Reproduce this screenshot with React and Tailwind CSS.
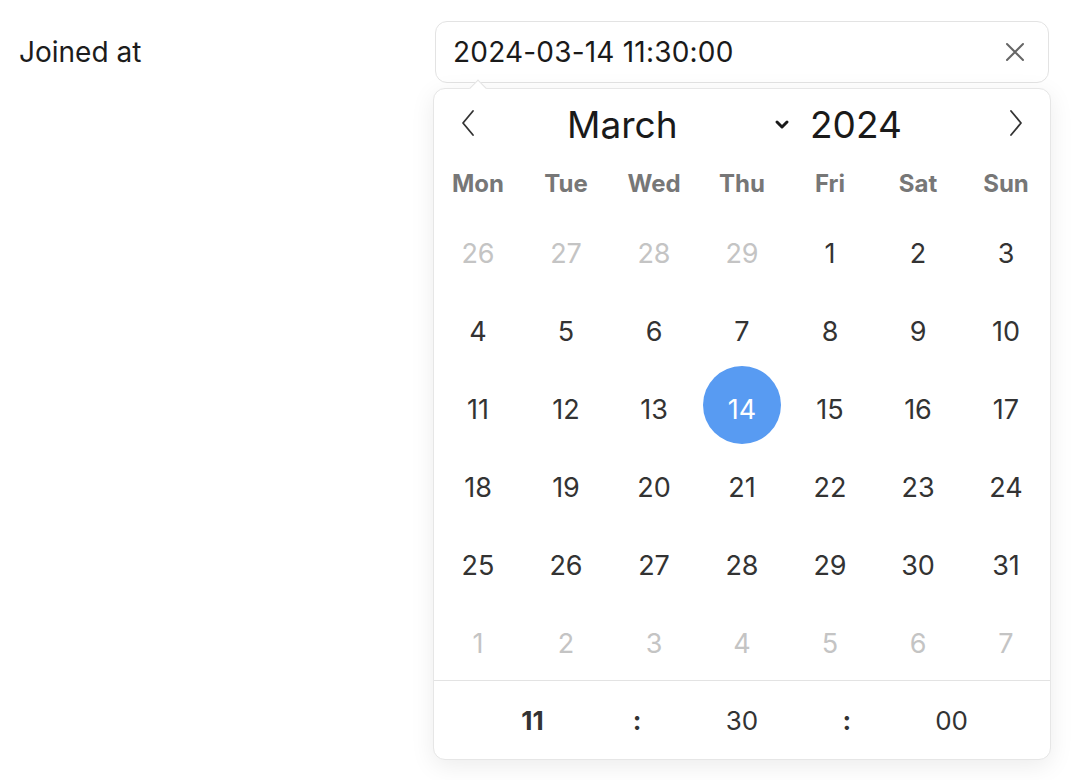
import React from 'react';

const weekdays = ['Mon', 'Tue', 'Wed', 'Thu', 'Fri', 'Sat', 'Sun'];

const buildDays = () => {
  const days = [];
  [26, 27, 28, 29].forEach((d) => days.push({ d, muted: true }));
  for (let d = 1; d <= 31; d++) days.push({ d, muted: false });
  for (let d = 1; d <= 7; d++) days.push({ d, muted: true });
  return days;
};

const App = () => {
  const days = buildDays();

  return (
    <div className="min-h-screen bg-white font-['Inter',sans-serif] relative">
      <div className="flex items-start pt-[21px]">
        <div className="w-[435px] pl-[19px] h-[62px] flex items-center text-[28px] text-[#1c1c1c]">
          Joined at
        </div>

        <div className="flex flex-col">
          <div className="w-[614px] h-[62px] border border-[#e3e3e3] rounded-[12px] flex items-center pl-[17px] pr-[22px] justify-between">
            <span className="text-[28px] text-[#1a1a1a] tracking-[0.2px]">2024-03-14 11:30:00</span>
            <svg width="22" height="22" viewBox="0 0 22 22" fill="none" stroke="#666" strokeWidth="2" strokeLinecap="round">
              <path d="M3 3 L19 19 M19 3 L3 19" />
            </svg>
          </div>

          <div className="relative -ml-[2px] mt-[5px] w-[618px] bg-white border border-[#e6e6e6] rounded-[12px] shadow-[0_6px_24px_rgba(0,0,0,0.08)]">
            <div className="absolute -top-[7px] left-[38px] w-[12px] h-[12px] bg-white border-l border-t border-[#e3e3e3] rotate-45" />

            <div className="flex items-center h-[72px]">
              <div className="w-[68px] flex justify-center -mt-[5px]">
                <svg width="16" height="28" viewBox="0 0 16 28" fill="none" stroke="#333" strokeWidth="1.8" strokeLinecap="round" strokeLinejoin="round">
                  <path d="M13 2 L3 14 L13 26" />
                </svg>
              </div>
              <div className="w-[272px] pl-[65px] text-[37px] text-[#1a1a1a]">March</div>
              <svg width="16" height="12" viewBox="0 0 16 12" fill="none" stroke="#1a1a1a" strokeWidth="3" strokeLinecap="round" strokeLinejoin="round">
                <path d="M3 3 L8 8 L13 3" />
              </svg>
              <div className="ml-[20px] text-[37px] text-[#1a1a1a]">2024</div>
              <div className="flex-1 flex justify-end pr-[26px] -mt-[5px]">
                <svg width="16" height="28" viewBox="0 0 16 28" fill="none" stroke="#333" strokeWidth="1.8" strokeLinecap="round" strokeLinejoin="round">
                  <path d="M3 2 L13 14 L3 26" />
                </svg>
              </div>
            </div>

            <div className="grid grid-cols-7 h-[46px] items-center">
              {weekdays.map((w) => (
                <div key={w} className="text-center text-[24px] font-bold text-[#777]">{w}</div>
              ))}
            </div>

            <div className="grid grid-cols-7 pt-[8px]">
              {days.map((item, i) => {
                const selected = !item.muted && item.d === 14;
                return (
                  <div key={i} className="h-[78px] flex items-center justify-center">
                    {selected ? (
                      <div className="w-[78px] h-[78px] -mt-[10px] pt-[10px] rounded-full bg-[#589bf2] flex items-center justify-center text-white text-[27px]">
                        {item.d}
                      </div>
                    ) : (
                      <span className={item.muted ? 'text-[27px] text-[#c4c4c4]' : 'text-[27px] text-[#333]'}>
                        {item.d}
                      </span>
                    )}
                  </div>
                );
              })}
            </div>

            <div className="-mt-[3px] border-t border-[#e3e3e3] grid grid-cols-5 px-[46px] h-[79px] items-center text-[26px] text-[#333]">
              <div className="text-center font-bold">11</div>
              <div className="text-center font-bold">:</div>
              <div className="text-center">30</div>
              <div className="text-center font-bold">:</div>
              <div className="text-center">00</div>
            </div>
          </div>
        </div>
      </div>
    </div>
  );
};

export default App;
